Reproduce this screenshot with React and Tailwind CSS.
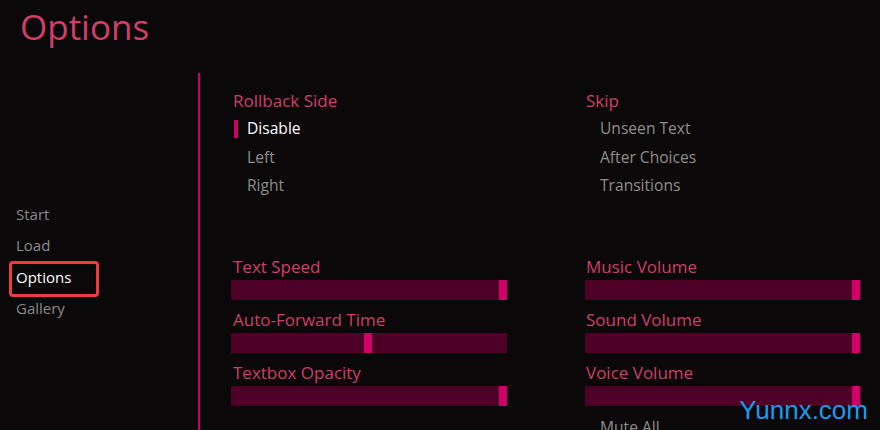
import React from "react";

const FONT = { fontFamily: '"Open Sans", "DejaVu Sans", sans-serif' };

function Choice({ label, selected }) {
  return (
    <div className="relative flex h-[28.5px] items-center pl-[14px]">
      {selected && (
        <span className="absolute left-[1px] top-[5px] h-[18px] w-[4px] bg-[#d10068]" />
      )}
      <span className={`text-[15.6px] leading-none ${selected ? "text-white" : "text-[#8e8e8e]"}`}>
        {label}
      </span>
    </div>
  );
}

function Slider({ label, pos }) {
  return (
    <div className="flex flex-col">
      <div className="flex h-[26px] items-center text-[17px] text-[#cf3f6a]">{label}</div>
      <div className="relative h-[20px] w-[276px] bg-[#4e0027]">
        <span className="absolute top-0 h-[20px] w-[8px] bg-[#d10068]" style={{ left: pos }} />
      </div>
    </div>
  );
}

export default function App() {
  return (
    <div className="relative h-[430px] w-[880px] overflow-hidden bg-[#0b0809]" style={FONT}>
      <div className="flex h-[73px] items-start pl-[20px] pt-[5px]">
        <h1 className="text-[35px] leading-[44px] text-[#cf3f6a]">Options</h1>
      </div>
      <div className="flex h-[357px]">
        <nav className="flex w-[198px] flex-col pl-[16px] pt-[125px]">
          <div className="flex h-[31.5px] items-center text-[15px] text-[#8a8a8a]">Start</div>
          <div className="flex h-[31.5px] items-center text-[15px] text-[#8a8a8a]">Load</div>
          <div className="relative flex h-[31.5px] items-center text-[15px] text-white">
            Options
            <span className="absolute left-[-7px] top-0 h-[36px] w-[90px] rounded-[4px] border-[3px] border-[#ee3b3b]" />
          </div>
          <div className="flex h-[31.5px] items-center text-[15px] text-[#8a8a8a]">Gallery</div>
        </nav>
        <div className="w-[2px] bg-[#cc0066]" />
        <div className="flex flex-col pl-[31px] pt-[15px]">
          <div className="flex gap-[78px]">
            <div className="flex w-[276px] flex-col">
              <div className="flex h-[26px] items-center pl-[2px] text-[17px] text-[#cf3f6a]">Rollback Side</div>
              <div className="pl-[2px] pt-[1px]">
                <Choice label="Disable" selected />
                <Choice label="Left" />
                <Choice label="Right" />
              </div>
            </div>
            <div className="flex w-[276px] flex-col">
              <div className="flex h-[26px] items-center pl-[1px] text-[17px] text-[#cf3f6a]">Skip</div>
              <div className="pl-[1px] pt-[1px]">
                <Choice label="Unseen Text" />
                <Choice label="After Choices" />
                <Choice label="Transitions" />
              </div>
            </div>
          </div>
          <div className="mt-[53.5px] flex gap-[78px]">
            <div className="flex flex-col gap-[7px] pl-0">
              <Slider label={<span className="pl-[2px]">Text Speed</span>} pos="268px" />
              <Slider label={<span className="pl-[2px]">Auto-Forward Time</span>} pos="133px" />
              <Slider label={<span className="pl-[2px]">Textbox Opacity</span>} pos="268px" />
            </div>
            <div className="flex flex-col gap-[7px]">
              <Slider label={<span className="pl-[1px]">Music Volume</span>} pos="267px" />
              <Slider label={<span className="pl-[1px]">Sound Volume</span>} pos="267px" />
              <Slider label={<span className="pl-[1px]">Voice Volume</span>} pos="267px" />
              <div className="pl-[1px] pt-[1px]">
                <Choice label="Mute All" />
              </div>
            </div>
          </div>
        </div>
      </div>
      <div
        className="absolute right-[12px] top-[397px] text-[26px] leading-[26px] text-[#1a9bef]"
        style={{ fontFamily: '"Liberation Sans", Arial, sans-serif' }}
      >
        Yunnx.com
      </div>
    </div>
  );
}
